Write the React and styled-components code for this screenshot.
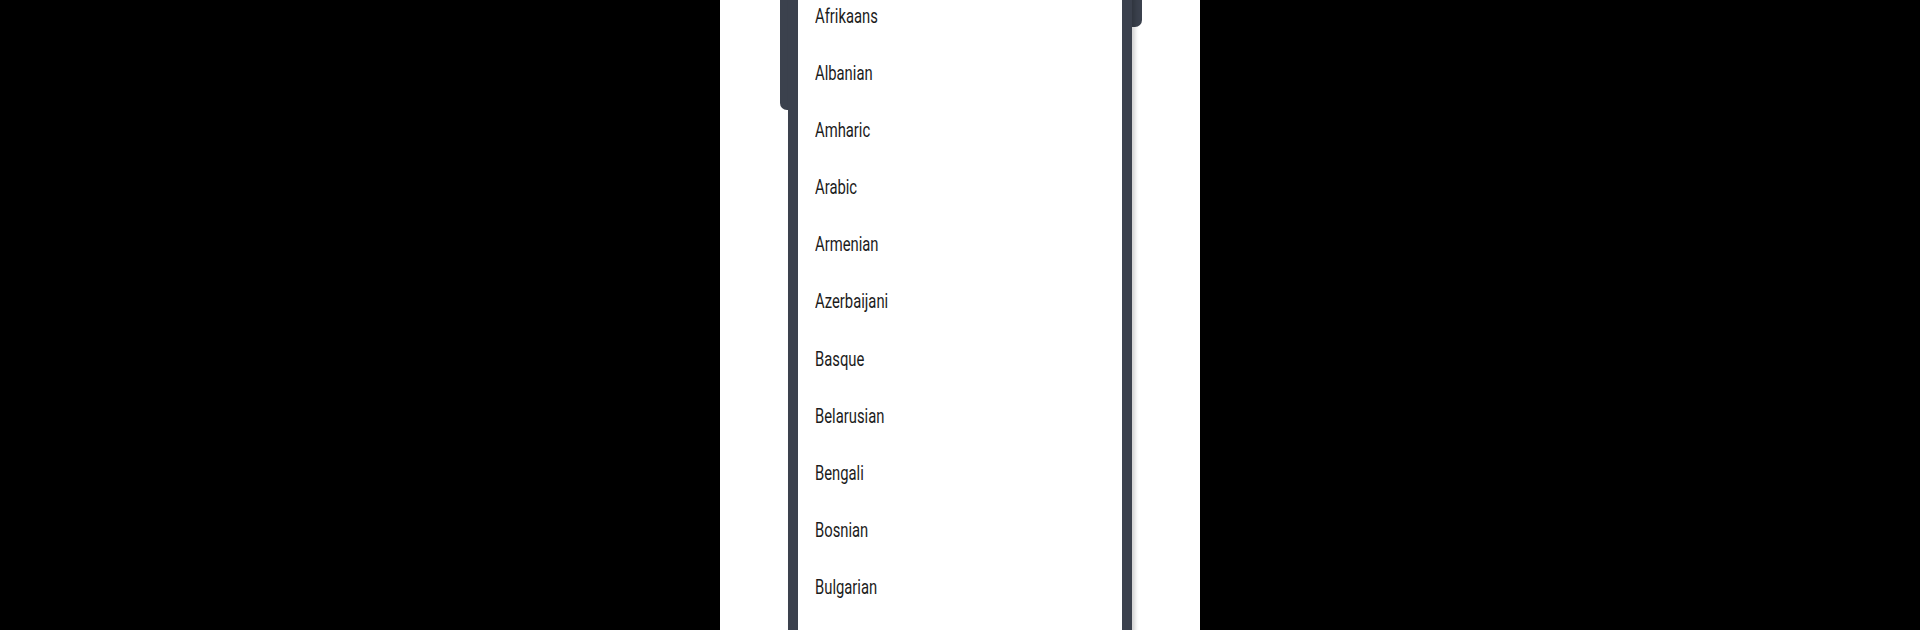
import styled, { createGlobalStyle } from "styled-components";

const GlobalStyle = createGlobalStyle`
  html, body {
    margin: 0;
    padding: 0;
    background: #000;
  }
  #root {
    height: 630px;
  }
`;

const Screen = styled("div")`
  position: relative;
  width: 480px;
  height: 630px;
  margin: 0 auto;
  background: #fff;
  overflow: hidden;
  font-family: Roboto, "Noto Sans", sans-serif;
`;

const SelectField = styled("div")`
  position: relative;
  margin-left: 60px;
  width: 362px;
  height: 27px;
  background: #3b414d;
  border-radius: 0 0 7px 7px;

  &::after {
    content: "";
    position: absolute;
    left: 0;
    top: 0;
    width: 14px;
    height: 110px;
    background: #3b414d;
    border-radius: 0 0 0 7px;
  }
`;

const Menu = styled("ul")`
  position: absolute;
  top: -12.5px;
  left: 68px;
  width: 344px;
  box-sizing: border-box;
  margin: 0;
  padding: 0 0 40px;
  list-style: none;
  background: #fff;
  border-left: 10px solid #3b414d;
  border-right: 10px solid #3b414d;
  box-shadow: 3px 0 4px rgba(0, 0, 0, 0.18);
  z-index: 2;
`;

const Option = styled("li")`
  height: 57.2px;
  line-height: 57.2px;
  padding-left: 17px;
  font-size: 20px;
  color: #1c1c1c;
  white-space: nowrap;
`;

const Label = styled("span")`
  display: inline-block;
  transform: scaleX(0.74);
  transform-origin: left center;
`;

const languages = [
  "Afrikaans",
  "Albanian",
  "Amharic",
  "Arabic",
  "Armenian",
  "Azerbaijani",
  "Basque",
  "Belarusian",
  "Bengali",
  "Bosnian",
  "Bulgarian",
];

function App() {
  return (
    <>
      <GlobalStyle />
      <Screen>
        <SelectField />
        <Menu>
          {languages.map((lang) => (
            <Option key={lang}>
              <Label>{lang}</Label>
            </Option>
          ))}
        </Menu>
      </Screen>
    </>
  );
}

export default App;
